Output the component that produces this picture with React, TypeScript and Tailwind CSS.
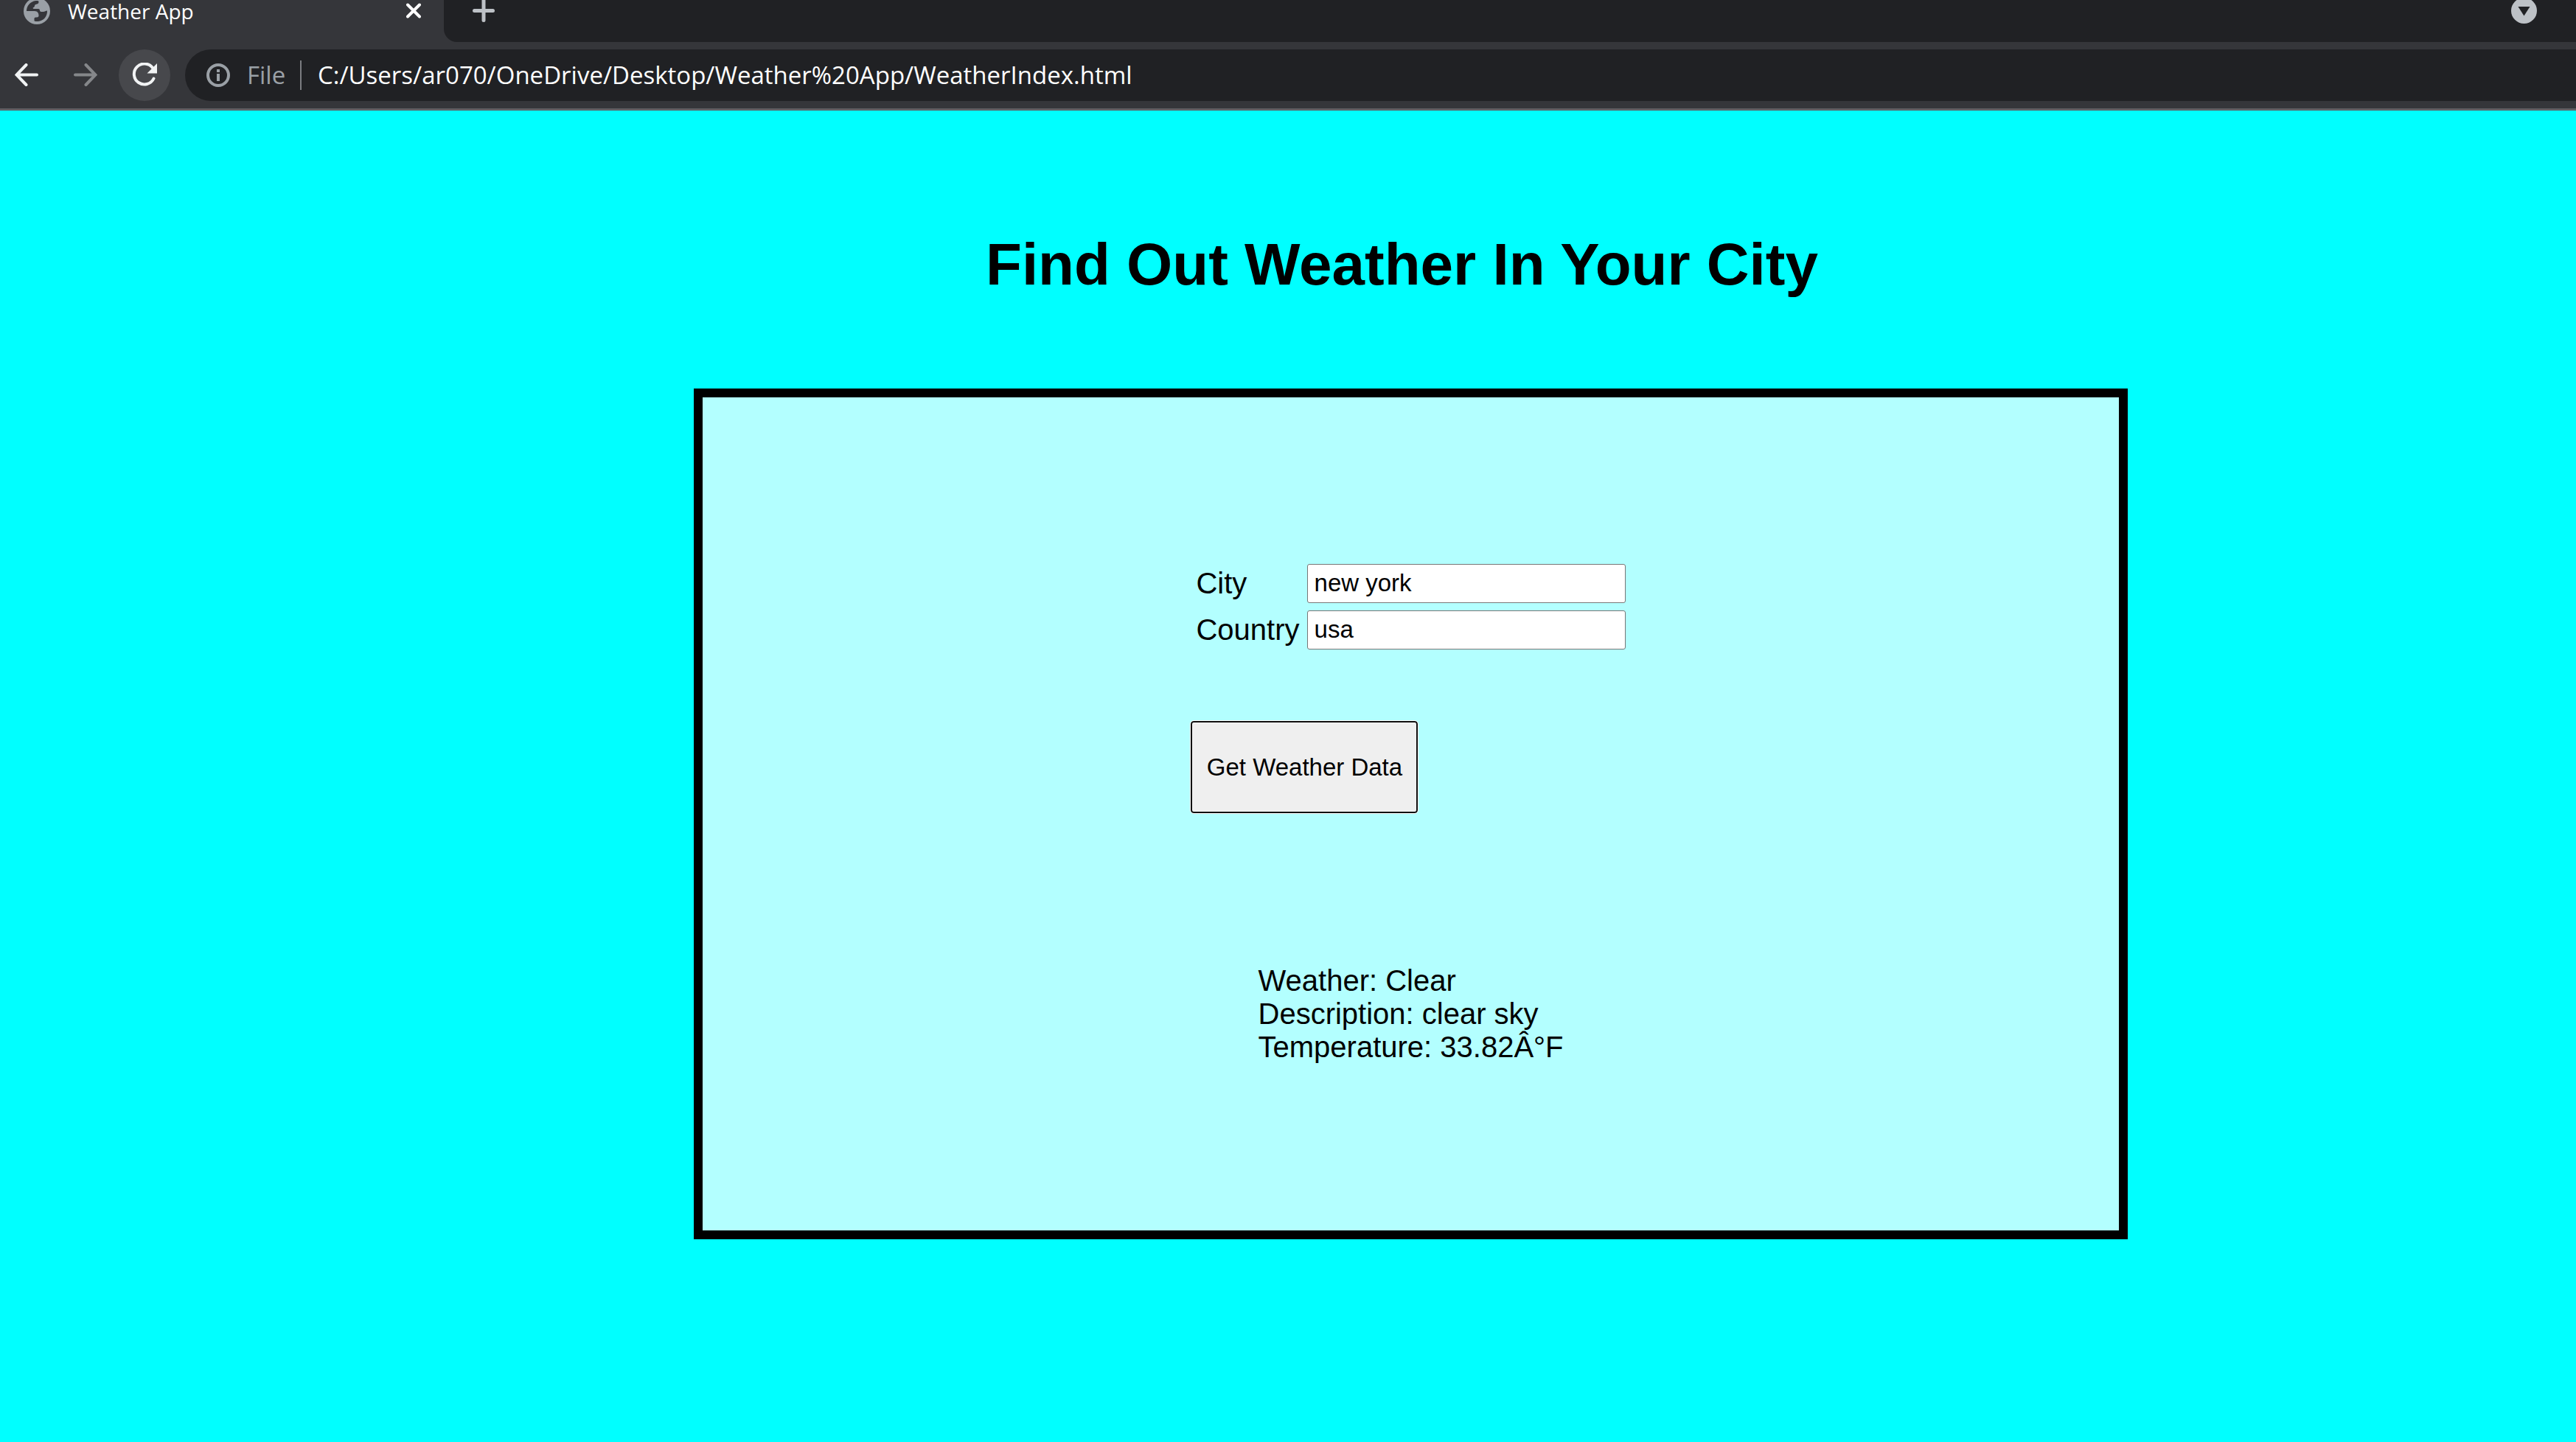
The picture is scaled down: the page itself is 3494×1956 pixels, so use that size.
import { useState } from 'react';

function BrowserTabs() {
  return (
    <div className="flex h-[57px] bg-[#35363a]">
      <div className="flex w-[602px] shrink-0 items-start pl-8">
        <svg className="-mt-[3px] size-9" viewBox="0 0 36 36" aria-hidden="true">
          <circle cx="18" cy="18" r="18" fill="#9aa0a6" />
          <path
            d="M4 18C4 11 9 5 16.500 4C19 3.700 20.500 4 20.500 5.500C20.500 8 19 8.500 16.500 9C14.500 9.500 15.500 12.500 13.500 13C12 13.500 12.500 15 14 15H20C21.500 15 22 16 22 17.500C22.500 19.500 25 19 26.500 19C29 19 29.500 17.500 32 17.500C32.500 25 27 31.500 19.500 32C17 32.200 14.500 32 14.500 31V28C14.500 26.500 16 26.500 18 26.500C20 26.500 20.500 25.500 20.500 24C20.500 21 19 18 15 18Z"
            fill="#35363a"
          />
        </svg>
        <span className="ml-6 flex-1 text-[28px] leading-[30px] text-white">Weather App</span>
        <button type="button" aria-label="Close tab" className="mr-[31px]">
          <svg className="h-[29px] w-5" viewBox="0 0 20 29" fill="none" stroke="#fff" strokeWidth="4" strokeLinecap="round">
            <path d="M2 6.500 18 22.500M18 6.500 2 22.500" />
          </svg>
        </button>
      </div>
      <div className="flex flex-1 items-start justify-between rounded-bl-[18px] bg-[#202124] pr-[53px] pl-[39px]">
        <button type="button" aria-label="New tab">
          <svg className="h-[30px] w-[30px]" viewBox="0 0 30 30" fill="none" stroke="#bdc1c6" strokeWidth="5" strokeLinecap="round">
            <path d="M2.500 14.500H27.500M15 0V27.500" />
          </svg>
        </button>
        <button type="button" aria-label="Search tabs">
          <svg className="-mt-[3px] size-[35px]" viewBox="0 0 35 35">
            <circle cx="17.500" cy="17.500" r="17.500" fill="#bdc1c6" />
            <path d="M9.500 12H25.500L17.500 24.500Z" fill="#202124" />
          </svg>
        </button>
      </div>
    </div>
  );
}

function Toolbar() {
  return (
    <div className="flex items-center border-b-[3px] border-[#5f6165] bg-[#35363a] py-[10px] pl-5">
      <button type="button" aria-label="Back">
        <svg className="size-8" viewBox="0 0 32 32" fill="none" stroke="#f1f3f4" strokeWidth="4" strokeLinecap="round">
          <path d="M30 15.500H2.500M15.500 2 2.500 15.500 15.500 29" />
        </svg>
      </button>
      <button type="button" aria-label="Forward" className="ml-12">
        <svg className="size-8" viewBox="0 0 32 32" fill="none" stroke="#85878a" strokeWidth="4" strokeLinecap="round">
          <path d="M2 15.500H29.500M16.500 2 29.500 15.500 16.500 29" />
        </svg>
      </button>
      <button
        type="button"
        aria-label="Reload"
        className="ml-[29px] flex size-[70px] items-center justify-center rounded-full bg-[#47484c]"
      >
        <svg className="size-[34px]" viewBox="0 0 34 34">
          <path d="M28 7A14 14 0 1 0 29.500 21.500" fill="none" stroke="#f1f3f4" strokeWidth="4" strokeLinecap="round" />
          <path d="M34 1V14.500H20.500Z" fill="#f1f3f4" />
        </svg>
      </button>
      <form
        className="ml-5 flex h-[70px] flex-1 items-center rounded-l-full bg-[#202124] pl-[29px]"
        onSubmit={(e) => e.preventDefault()}
      >
        <svg className="size-8 shrink-0" viewBox="0 0 32 32">
          <circle cx="16" cy="16" r="14" fill="none" stroke="#9aa0a6" strokeWidth="4" />
          <path d="M14 8H18V12H14ZM14 14H18V24H14Z" fill="#9aa0a6" />
        </svg>
        <span className="ml-[23px] w-[72px] text-[33px] leading-[40px] text-[#9aa0a6]">File</span>
        <span className="h-10 w-[2px] shrink-0 bg-[#7b7d81]" />
        <input
          type="text"
          aria-label="Address"
          defaultValue="C:/Users/ar070/OneDrive/Desktop/Weather%20App/WeatherIndex.html"
          className="ml-[22px] h-12 min-w-0 flex-1 bg-transparent text-[33px] text-white outline-none"
        />
      </form>
    </div>
  );
}

const inputClass =
  'h-[53px] w-[432px] rounded-[3px] border border-[#767676] bg-white px-[9px] pb-[2px] text-[33px] text-black';

export default function App() {
  const [city, setCity] = useState('new york');
  const [country, setCountry] = useState('usa');

  return (
    <div className="flex min-h-screen flex-col bg-[#00ffff] text-black">
      <header className="font-['Open_Sans',sans-serif]">
        <BrowserTabs />
        <Toolbar />
      </header>
      <main className="grid flex-1 grid-cols-[941fr_1945fr_608fr] content-start pt-[163px] font-['Liberation_Sans',Arial,sans-serif]">
        <h1 className="col-start-2 pr-6 text-center text-[80px] leading-[92px] font-bold">
          Find Out Weather In Your City
        </h1>
        <section className="col-start-2 mt-[122px] flex flex-col items-center border-[12px] border-black bg-[#b3ffff] pt-[226px] pb-[226px] text-[40px] leading-[45px]">
          <form onSubmit={(e) => e.preventDefault()}>
            <div className="grid grid-cols-[auto_auto] items-center gap-x-[10px] gap-y-[10px] px-[7px]">
              <label htmlFor="city">City</label>
              <input id="city" type="text" value={city} onChange={(e) => setCity(e.target.value)} className={inputClass} />
              <label htmlFor="country">Country</label>
              <input
                id="country"
                type="text"
                value={country}
                onChange={(e) => setCountry(e.target.value)}
                className={inputClass}
              />
            </div>
            <button
              type="submit"
              className="mt-[97px] h-[125px] w-[308px] rounded-[4px] border-2 border-[#101010] bg-[#efefef] text-[33px] outline-1 outline-white"
            >
              Get Weather Data
            </button>
          </form>
          <div className="mt-[205px]">
            <p>Weather: Clear</p>
            <p>Description: clear sky</p>
            <p>Temperature: 33.82Â°F</p>
          </div>
        </section>
      </main>
    </div>
  );
}
